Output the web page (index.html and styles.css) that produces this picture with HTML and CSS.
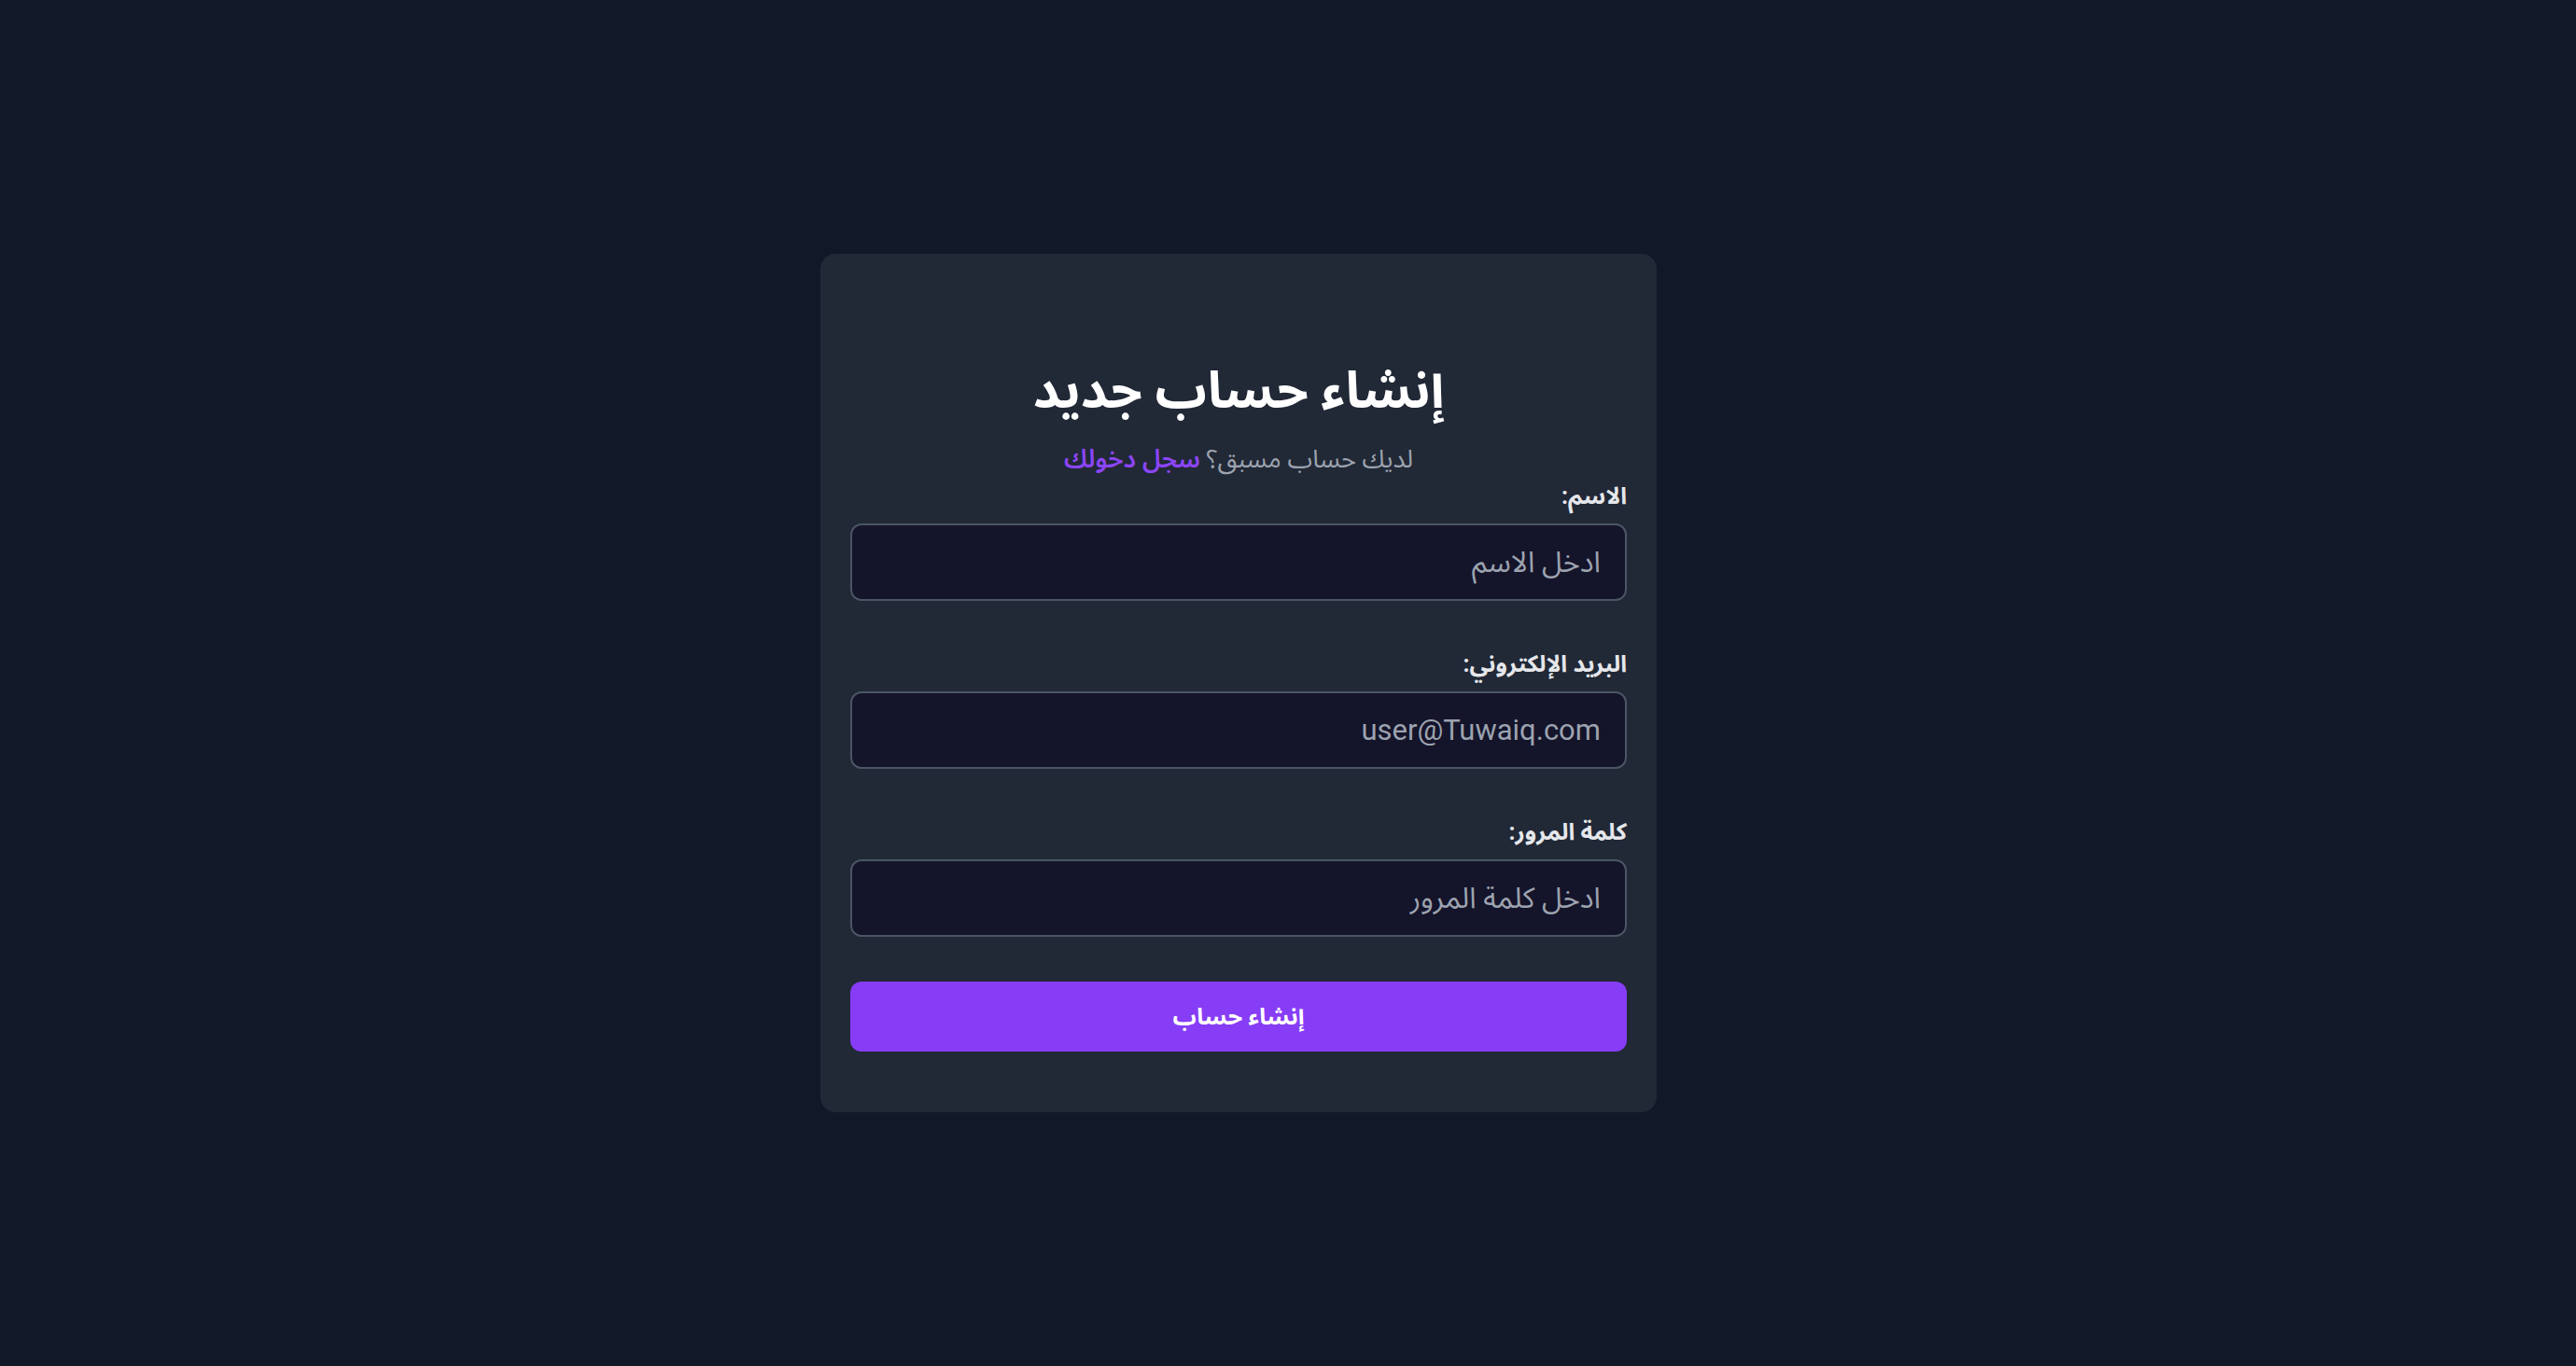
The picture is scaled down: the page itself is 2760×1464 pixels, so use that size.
FILE: index.html
```html
<!DOCTYPE html>
<html lang="ar" dir="rtl">
<head>
<meta charset="utf-8">
<title>إنشاء حساب جديد</title>
<link rel="stylesheet" href="styles.css">
</head>
<body>
<main class="page">
  <section class="card">
    <h1 class="title">إنشاء حساب جديد</h1>
    <p class="subtitle">لديك حساب مسبق؟ <a class="link" href="#">سجل دخولك</a></p>
    <form class="form">
      <div class="field">
        <label class="label" for="name">الاسم:</label>
        <input class="input" id="name" type="text" placeholder="ادخل الاسم">
      </div>
      <div class="field">
        <label class="label" for="email">البريد الإلكتروني:</label>
        <input class="input" id="email" type="email" placeholder="user@Tuwaiq.com">
      </div>
      <div class="field">
        <label class="label" for="pass">كلمة المرور:</label>
        <input class="input" id="pass" type="password" placeholder="ادخل كلمة المرور">
      </div>
      <button class="button" type="button">إنشاء حساب</button>
    </form>
  </section>
</main>
</body>
</html>
```
FILE: styles.css
```css
* { box-sizing: border-box; }
html, body { margin: 0; padding: 0; }
body {
  background: #111827;
  font-family: Roboto, "Noto Sans Arabic", "DejaVu Sans", sans-serif;
  color: #e5e7eb;
}
.page {
  min-height: 100vh;
  display: flex;
  align-items: center;
  justify-content: center;
  padding-right: 106px;
}
.card {
  width: 896px;
  background: #212836;
  border-radius: 16px;
  padding: 110px 32px 65px;
  display: flex;
  flex-direction: column;
}
.title {
  margin: 0;
  text-align: center;
  font-size: 55px;
  line-height: 72px;
  font-weight: 700;
  color: #ffffff;
}
.subtitle {
  margin: 18px 0 0;
  text-align: center;
  font-size: 27px;
  line-height: 40px;
  color: #9ca3af;
}
.link {
  color: #8b45f5;
  font-weight: 600;
  text-decoration: none;
}
.form {
  display: flex;
  flex-direction: column;
  gap: 48px;
}
.field {
  display: flex;
  flex-direction: column;
  gap: 9px;
}
.label {
  font-size: 25px;
  line-height: 40px;
  font-weight: 700;
  color: #e5e7eb;
}
.input {
  height: 83px;
  width: 100%;
  background: #14142a;
  border: 2px solid #4b5563;
  border-radius: 12px;
  padding: 0 26px;
  font-family: inherit;
  font-size: 31px;
  color: #e5e7eb;
  direction: rtl;
  text-align: right;
  outline: none;
}
.input::placeholder { color: #9ca3af; opacity: 1; }
.button {
  height: 75px;
  width: 100%;
  border: 0;
  border-radius: 12px;
  background: #873df5;
  color: #ffffff;
  font-family: inherit;
  font-size: 25px;
  font-weight: 700;
  cursor: pointer;
}
```
